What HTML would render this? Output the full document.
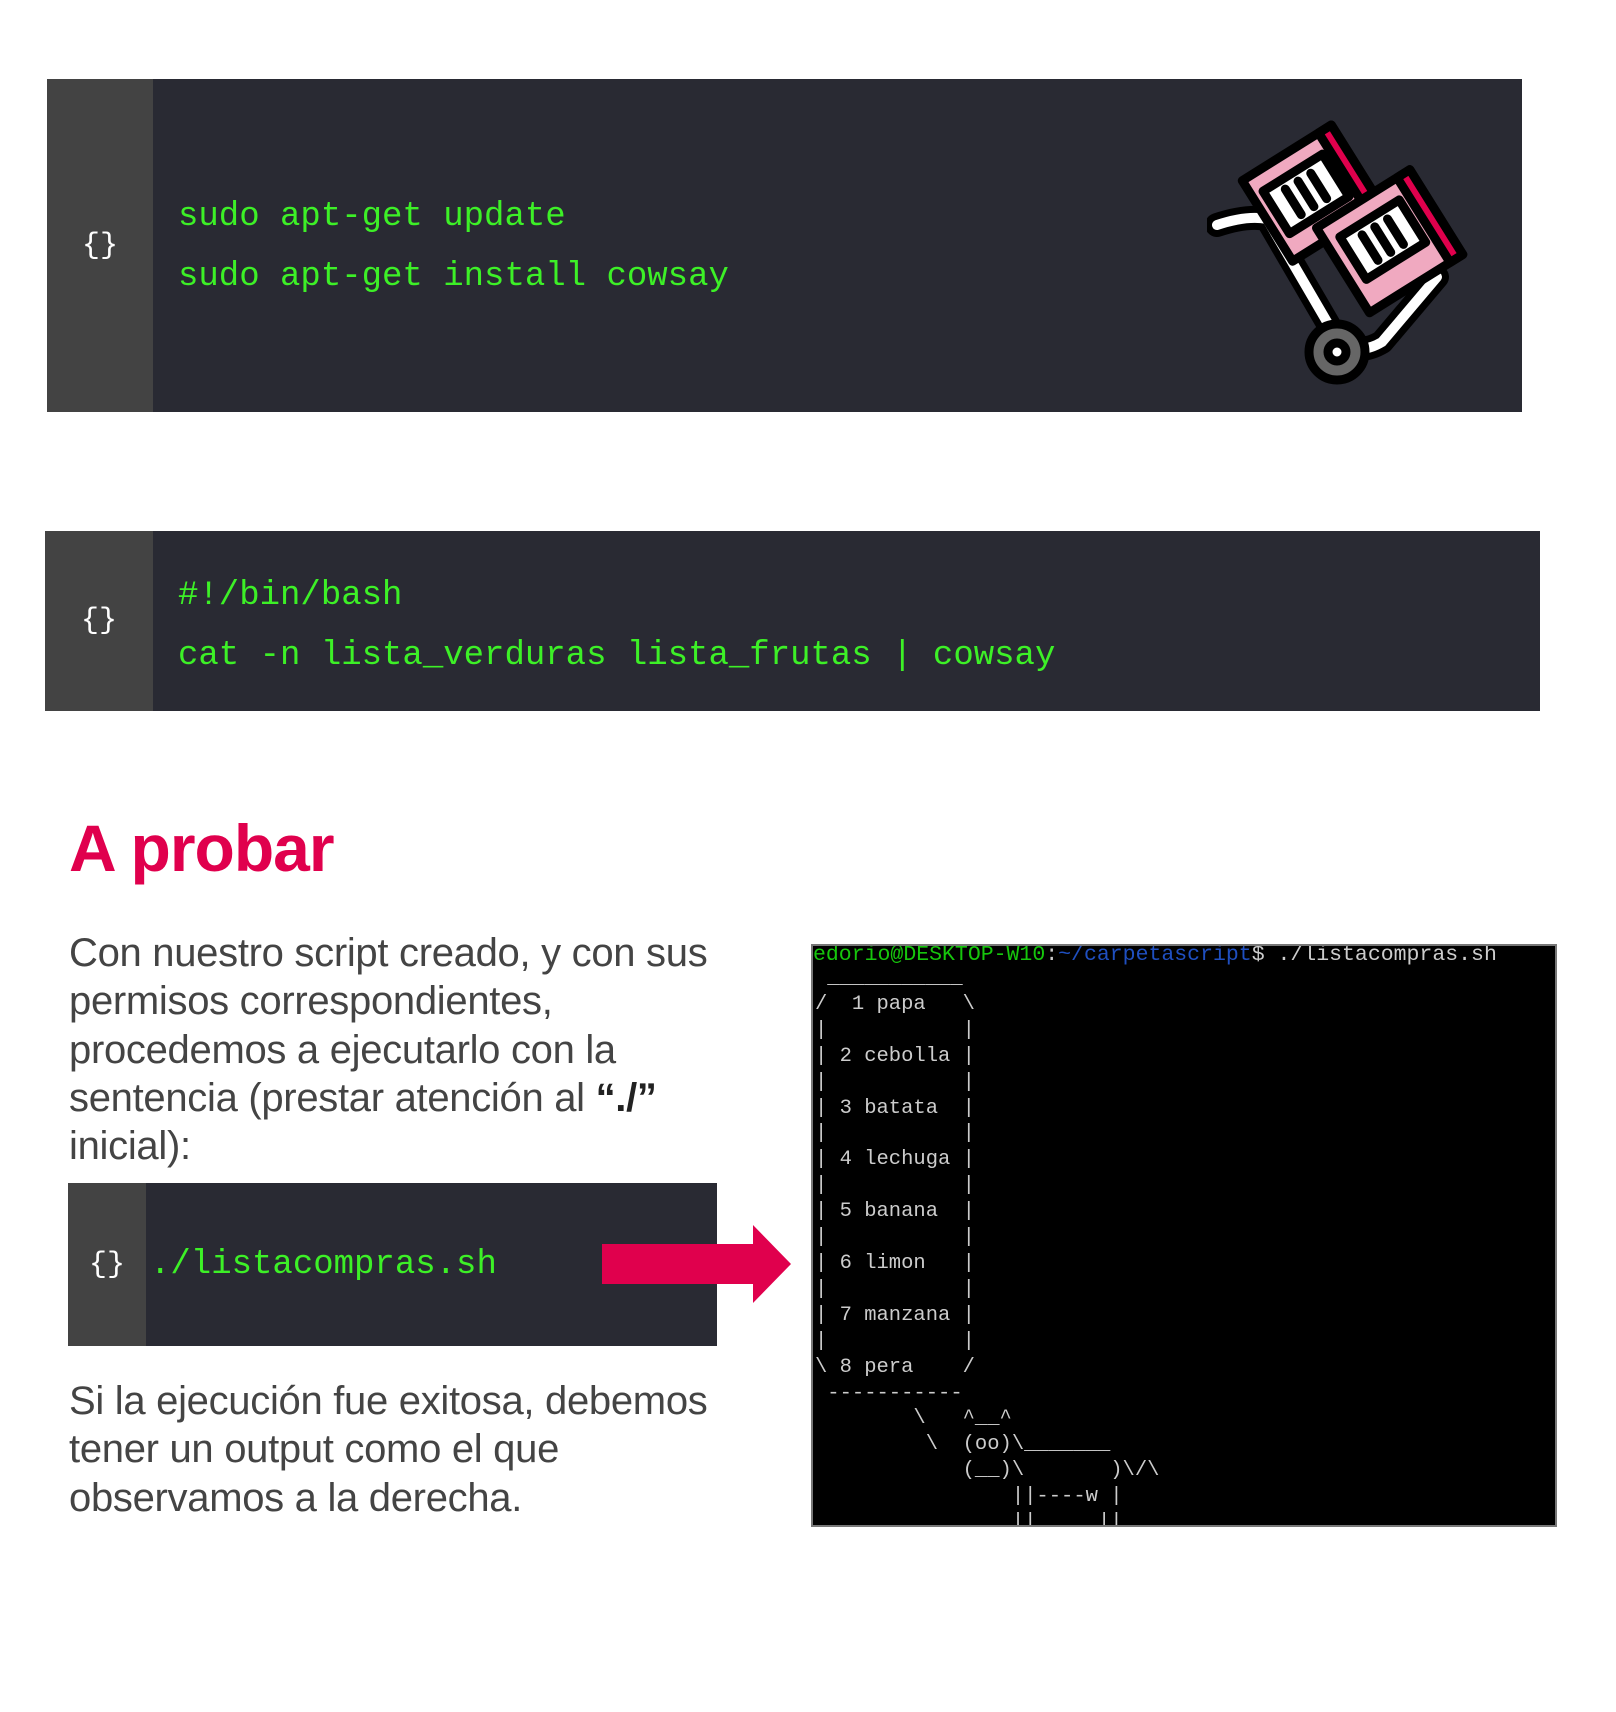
<!DOCTYPE html>
<html><head><meta charset="utf-8"><style>
body{margin:0;width:1616px;height:1712px;background:#fff;position:relative;overflow:hidden;font-family:"Liberation Sans",sans-serif}
.blk{position:absolute;background:#292a33}
.gut{position:absolute;left:0;top:0;bottom:0;background:#434343;color:#fff;font-family:"Liberation Mono",monospace;font-size:30px;display:flex;align-items:center;justify-content:center}
.code{position:absolute;font-family:"Liberation Mono",monospace;font-size:34px;color:#3df027;white-space:pre;line-height:60px}
.p{position:absolute;left:69px;font-size:40px;color:#444;line-height:48.3px;letter-spacing:-0.3px}
.term{position:absolute;left:811px;top:944px;width:742px;height:579px;background:#000;border:2px solid #777;overflow:hidden}
.term pre{margin:0;position:absolute;font-family:"Liberation Mono",monospace;font-size:20.5px;color:#ccc}
</style></head><body>
<div class="blk" style="left:47px;top:79px;width:1475px;height:333px">
 <div class="gut" style="width:106px">{}</div>
 <div class="code" style="left:131px;top:108px">sudo apt-get update
sudo apt-get install cowsay</div>
 <svg style="position:absolute;left:1160px;top:28px" width="290" height="290" viewBox="0 0 290 290">
  <g stroke="#000" stroke-width="9" stroke-linejoin="round" stroke-linecap="round">
   <path d="M10 118 Q40 108 60 112 L130 232" fill="none" stroke-width="24"/>
   <path d="M10 118 Q40 108 60 112 L130 232" fill="none" stroke="#fff" stroke-width="10"/>
   <path d="M130 232 Q150 250 175 235 L230 170" fill="none" stroke-width="24"/>
   <path d="M130 232 Q150 250 175 235 L230 170" fill="none" stroke="#fff" stroke-width="10"/>
   <g transform="rotate(-32 110 80)"><rect x="50" y="35" width="105" height="95" fill="#f0a9c0"/><rect x="140" y="35" width="15" height="95" fill="#e0004d"/><rect x="62" y="55" width="70" height="50" fill="#fff"/><path d="M82 65v30M97 65v30M112 65v30"/></g>
   <g transform="rotate(-32 180 130)"><rect x="125" y="85" width="110" height="100" fill="#f0a9c0"/><rect x="220" y="85" width="15" height="100" fill="#e0004d"/><rect x="140" y="105" width="70" height="50" fill="#fff"/><path d="M160 115v30M175 115v30M190 115v30"/></g>
   <circle cx="130" cy="245" r="28" fill="#666"/><circle cx="130" cy="245" r="9" fill="#fff"/>
  </g>
 </svg>
</div>
<div class="blk" style="left:45px;top:531px;width:1495px;height:180px">
 <div class="gut" style="width:108px">{}</div>
 <div class="code" style="left:133px;top:35px">#!/bin/bash
cat -n lista_verduras lista_frutas | cowsay</div>
</div>
<div style="position:absolute;left:69px;top:810px;font-size:66px;font-weight:bold;color:#e0004d;letter-spacing:-1px">A probar</div>
<div class="p" style="top:929px;width:720px">Con nuestro script creado, y con sus<br>permisos correspondientes,<br>procedemos a ejecutarlo con la<br>sentencia (prestar atención al <b style="color:#222">“./”</b><br>inicial):</div>
<div class="blk" style="left:68px;top:1183px;width:649px;height:163px">
 <div class="gut" style="width:78px">{}</div>
 <div class="code" style="left:82px;top:52px">./listacompras.sh</div>
</div>
<svg style="position:absolute;left:602px;top:1225px" width="190" height="78"><path d="M0 19H151V0L189 39L151 78V59H0Z" fill="#e0004d"/></svg>
<div class="p" style="top:1377px;width:720px">Si la ejecución fue exitosa, debemos<br>tener un output como el que<br>observamos a la derecha.</div>
<div class="term">
<pre style="left:0;top:-4px;font-size:21.5px;line-height:26px"><span style="color:#16c60c">edorio@DESKTOP-W10</span>:<span style="color:#1f4fc0">~/carpetascript</span>$ ./listacompras.sh</pre>
<pre style="left:2px;top:20px;line-height:25.9px"> ___________
/  1 papa   \
|           |
| 2 cebolla |
|           |
| 3 batata  |
|           |
| 4 lechuga |
|           |
| 5 banana  |
|           |
| 6 limon   |
|           |
| 7 manzana |
|           |
\ 8 pera    /
 -----------
        \   ^__^
         \  (oo)\_______
            (__)\       )\/\
                ||----w |
                ||     ||</pre>
</div>
</body></html>
